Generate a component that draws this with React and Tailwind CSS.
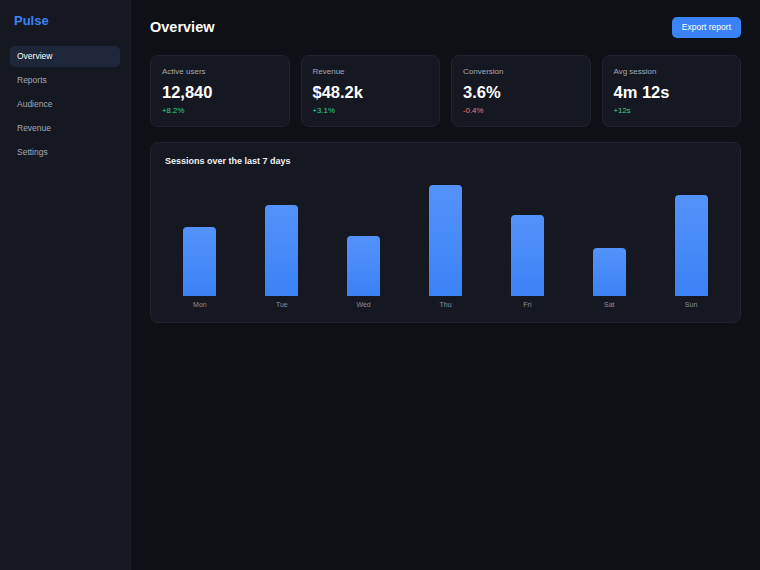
import React from "react";

const nav = ["Overview", "Reports", "Audience", "Revenue", "Settings"];

const stats = [
  { label: "Active users", value: "12,840", delta: "+8.2%", up: true },
  { label: "Revenue", value: "$48.2k", delta: "+3.1%", up: true },
  { label: "Conversion", value: "3.6%", delta: "-0.4%", up: false },
  { label: "Avg session", value: "4m 12s", delta: "+12s", up: true },
];

const days = [
  { day: "Mon", h: 69 },
  { day: "Tue", h: 91 },
  { day: "Wed", h: 60 },
  { day: "Thu", h: 111 },
  { day: "Fri", h: 81 },
  { day: "Sat", h: 48 },
  { day: "Sun", h: 101 },
];

export default function App() {
  return (
    <div
      className="flex h-[570px] w-[760px] bg-[#0f1015] text-white"
      style={{ fontFamily: '"Liberation Sans", Arial, sans-serif' }}
    >
      <aside className="flex w-[131px] shrink-0 flex-col border-r border-[#1c1e27] bg-[#161821] px-[10px] pt-[13px]">
        <div className="px-[4px] text-[13px] font-bold leading-[16px] text-[#3b82f6]">Pulse</div>
        <nav className="mt-[17px] flex flex-col gap-[3px]">
          {nav.map((n, i) => (
            <div
              key={n}
              className={
                i === 0
                  ? "flex h-[21px] items-center rounded-[5px] bg-[#1e263a] px-[7px] text-[8.5px] text-white"
                  : "flex h-[21px] items-center rounded-[5px] px-[7px] text-[8.5px] text-[#a3a8b4]"
              }
            >
              {n}
            </div>
          ))}
        </nav>
      </aside>

      <main className="flex-1 px-[19px] pt-[16px]">
        <div className="flex h-[22px] items-center justify-between">
          <h1 className="text-[14.5px] font-bold leading-[18px]">Overview</h1>
          <button className="h-[21px] rounded-[5px] bg-[#3b82f6] px-[10px] text-[8.5px] leading-[21px] text-white">
            Export report
          </button>
        </div>

        <div className="mt-[17px] grid grid-cols-4 gap-[11px]">
          {stats.map((s) => (
            <div
              key={s.label}
              className="h-[72px] rounded-[8px] border border-[#1f2230] bg-[#161821] px-[11px] pt-[11px]"
            >
              <div className="text-[8px] leading-[10px] text-[#a3a8b4]">{s.label}</div>
              <div className="mt-[5px] text-[16.5px] font-bold leading-[20px]">{s.value}</div>
              <div
                className={
                  s.up
                    ? "mt-[4px] text-[7.8px] leading-[10px] text-[#34d399]"
                    : "mt-[4px] text-[7.8px] leading-[10px] text-[#f87171]"
                }
              >
                {s.delta}
              </div>
            </div>
          ))}
        </div>

        <section className="mt-[15px] rounded-[8px] border border-[#1f2230] bg-[#161821] px-[14px] pb-[12px] pt-[12px]">
          <h2 className="text-[9px] font-bold leading-[12px] text-[#eef0f4]">Sessions over the last 7 days</h2>
          <div className="mt-[17px] flex h-[112px] items-end gap-[12px]">
            {days.map((d) => (
              <div key={d.day} className="flex flex-1 flex-col items-center">
                <div
                  className="w-[33px] rounded-t-[4px] bg-gradient-to-b from-[#5392fa] to-[#3b82f6]"
                  style={{ height: d.h }}
                />
              </div>
            ))}
          </div>
          <div className="mt-[4px] flex gap-[12px]">
            {days.map((d) => (
              <div key={d.day} className="flex-1 text-center text-[7px] leading-[10px] text-[#8a8f9c]">
                {d.day}
              </div>
            ))}
          </div>
        </section>
      </main>
    </div>
  );
}
